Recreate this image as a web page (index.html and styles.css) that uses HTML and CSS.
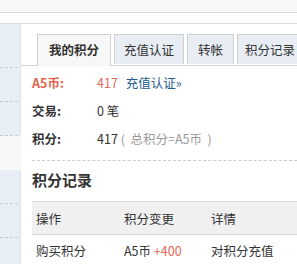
FILE: index.html
```html
<!DOCTYPE html>
<html lang="zh-CN">
<head>
    <meta charset="UTF-8">
    <title>我的积分</title>
    <link rel="stylesheet" href="styles.css">
</head>
<body>
    <div class="topbar"></div>
    <div class="subbar"></div>
    <div class="layout">
        <div class="sidebar">
            <div class="side-item first"></div>
            <div class="side-item"></div>
            <div class="side-item"></div>
            <div class="side-item current"></div>
            <div class="side-item"></div>
            <div class="side-item"></div>
            <div class="side-item"></div>
        </div>
        <div class="main">
            <ul class="tabs">
                <li class="tab active">我的积分</li>
                <li class="tab w70">充值认证</li>
                <li class="tab w47">转帐</li>
                <li class="tab w66">积分记录</li>
            </ul>
            <div class="info">
                <div class="info-row"><span class="label coin">A5币:</span><span class="val red">417</span><a class="link" href="#">充值认证»</a></div>
                <div class="info-row"><span class="label">交易:</span><span class="val">0 笔</span></div>
                <div class="info-row"><span class="label">积分:</span><span class="val">417 <span class="note">(&nbsp; 总积分=A5币&nbsp; )</span></span></div>
            </div>
            <h2>积分记录</h2>
            <table class="log">
                <tr><th>操作</th><th>积分变更</th><th>详情</th></tr>
                <tr><td>购买积分</td><td>A5币 <span class="plus">+400</span></td><td>对积分充值</td></tr>
            </table>
        </div>
    </div>
</body>
</html>
```

FILE: styles.css
```css
body { margin: 0; font-family: "Noto Sans CJK SC", "Liberation Sans", sans-serif; font-size: 12px; color: #333; background: #fff; overflow: hidden; width: 297px; height: 264px; }
.topbar { height: 12px; background: #f7f7f7; border-bottom: 1px solid #dadada; }
.subbar { height: 10px; background: #fff; border-bottom: 1px solid #dadada; }
.layout { display: flex; }
.sidebar { width: 20px; flex: none; background: #e8eef6; border-right: 1px solid #dde4ec; height: 260px; }
.side-item { height: 33px; border-bottom: 1px dashed #c6ccd3; margin-right: 2px; }
.side-item.first { height: 43px; }
.side-item.current { background: #f8f8f8; border-bottom-color: transparent; margin-right: -1px; }
.main { flex: 1; padding-left: 11px; min-width: 0; }
.tabs { list-style: none; margin: 10px 0 0 -11px; padding: 0 0 0 16px; display: flex; gap: 3px; border-bottom: 1px solid #d3d3d3; white-space: nowrap; height: 31px; }
.tab { flex: none; box-sizing: border-box; text-align: center; height: 30px; line-height: 29px; border: 1px solid #d0d0d0; border-bottom: none; background: #e7edf3; font-size: 12.5px; color: #333; }
.tab.active { width: 74px; background: #f7f7f7; font-weight: bold; height: 32px; }
.w70 { width: 70px; }
.w47 { width: 47px; }
.w66 { width: 66px; }
.info { padding-top: 3px; border-bottom: 1px dashed #ccc; padding-bottom: 7px; }
.info-row { height: 28px; line-height: 28px; display: flex; font-size: 12.5px; }
.label { width: 65px; font-weight: bold; color: #333; }
.label.coin { color: #e8644f; }
.val { margin-right: 8px; }
.red { color: #e2685e; }
.link { color: #275d8d; text-decoration: none; }
.note { color: #999; }
h2 { margin: 0; font-size: 15px; font-weight: bold; height: 40px; line-height: 38px; color: #333; }
.log { border-collapse: collapse; width: 280px; font-size: 12.5px; }
.log th { background: #f0f0f0; font-weight: normal; text-align: left; height: 32px; padding: 0 0 0 4px; border-top: 1px solid #d9d9d9; border-bottom: 1px solid #d9d9d9; }
.log th:nth-child(1), .log td:nth-child(1) { width: 84px; }
.log th:nth-child(2), .log td:nth-child(2) { width: 83px; }
.log td { height: 30px; padding: 0 0 0 4px; }
.plus { color: #e8645a; }
```
